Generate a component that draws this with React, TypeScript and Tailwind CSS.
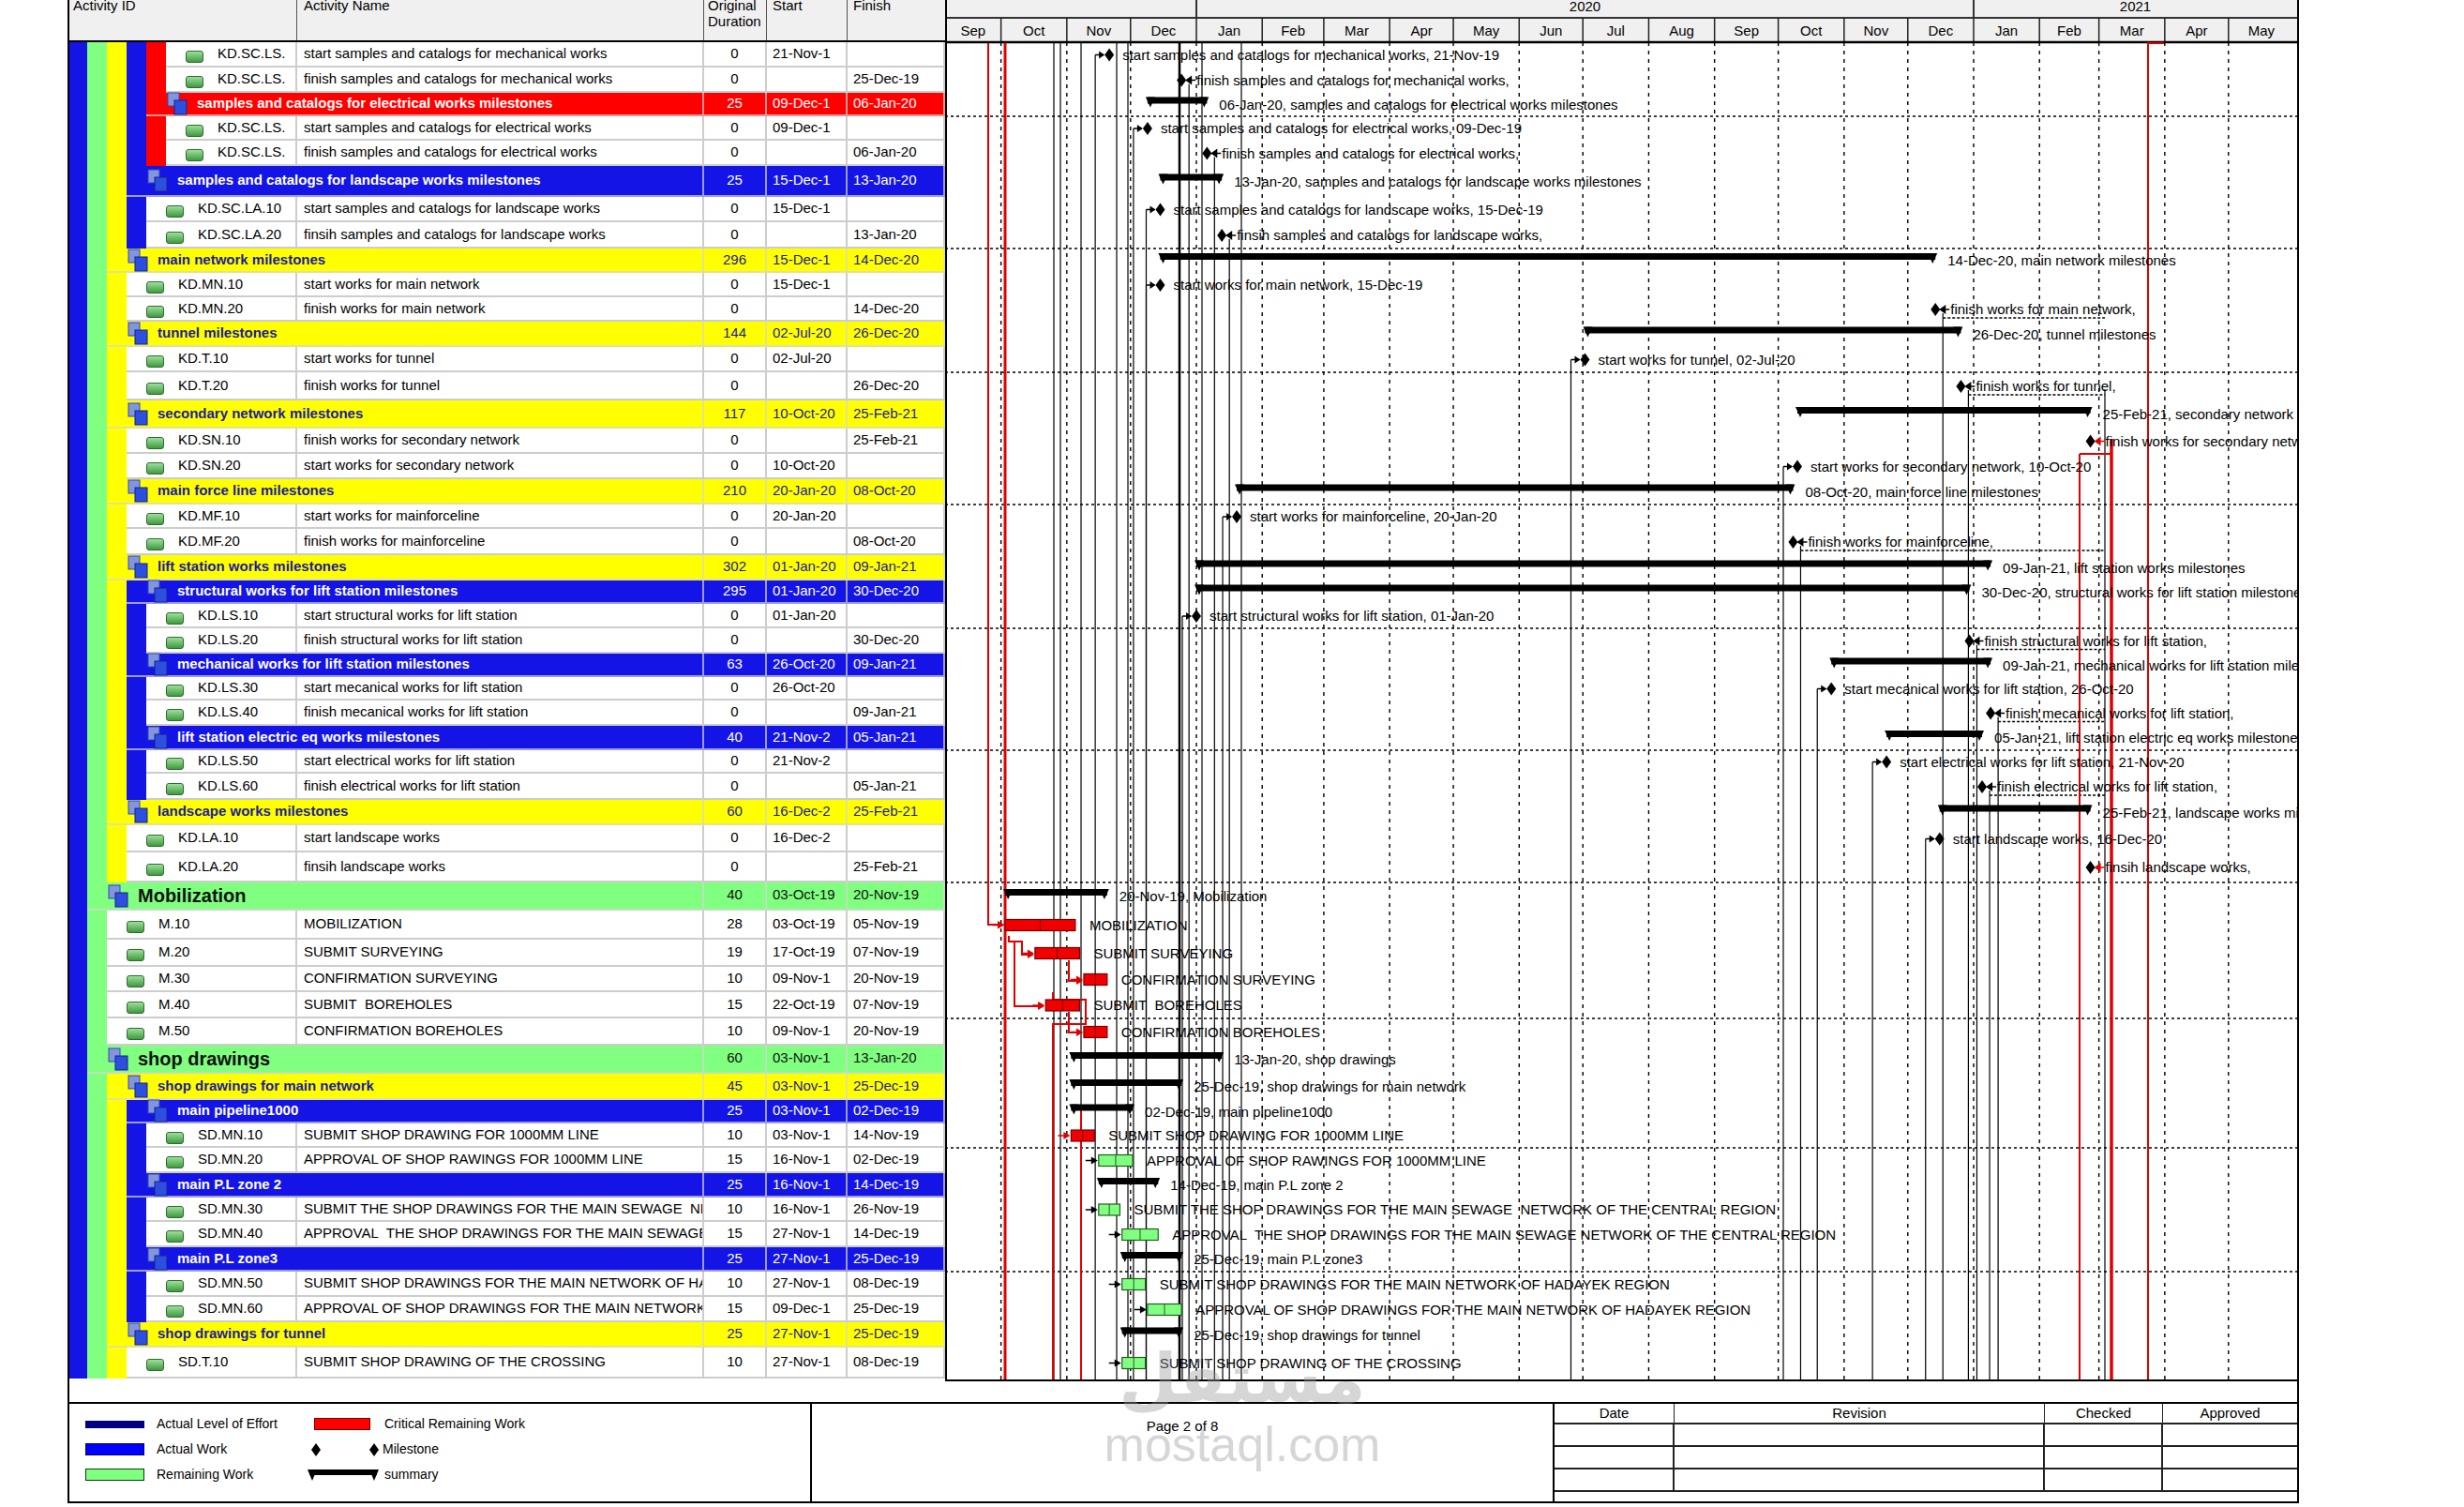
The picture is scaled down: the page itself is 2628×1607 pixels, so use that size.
import React from "react";

const MON = ["Jan", "Feb", "Mar", "Apr", "May", "Jun", "Jul", "Aug", "Sep", "Oct", "Nov", "Dec"];

// gantt scale: 1-Jan-20 sits at x=268, 2.265 px per day
const GW = 1442;
const GH = 1473;
const X0 = 268;
const PX = 2.265;

function days(s: string) {
  const [d, m, y] = s.split("-");
  return (Date.UTC(2000 + Number(y), MON.indexOf(m), Number(d)) - Date.UTC(2020, 0, 1)) / 86400000;
}
const X = (s: string) => X0 + days(s) * PX;

type Bar = {
  t: "sum" | "ms" | "mf" | "red" | "grn";
  s: string;
  e?: string;
  label: string;
  crit?: boolean;
  dash?: boolean;
};

type Row = {
  hc: string;
  b: string;
  k: "leaf" | "group" | "big";
  c?: "R" | "B" | "Y" | "G";
  id?: string;
  name: string;
  dur: string;
  st: string;
  fi: string;
  bar: Bar;
};

const ROWS: Row[] = [
  { hc: "h-[27px]", b: "BGYBR", k: "leaf", id: "KD.SC.LS.", name: "start samples and catalogs for mechanical works", dur: "0", st: "21-Nov-1", fi: "", bar: { t: "ms", s: "21-Nov-19", label: "start samples and catalogs for mechanical works, 21-Nov-19" } },
  { hc: "h-[27px]", b: "BGYBR", k: "leaf", id: "KD.SC.LS.", name: "finish samples and catalogs for mechanical works", dur: "0", st: "", fi: "25-Dec-19", bar: { t: "mf", s: "25-Dec-19", label: "finish samples and catalogs for mechanical works," } },
  { hc: "h-[25px]", b: "BGYB", k: "group", c: "R", name: "samples and catalogs for electrical works milestones", dur: "25", st: "09-Dec-1", fi: "06-Jan-20", bar: { t: "sum", s: "09-Dec-19", e: "06-Jan-20", label: "06-Jan-20, samples and catalogs for electrical works milestones" } },
  { hc: "h-[26px]", b: "BGYBR", k: "leaf", id: "KD.SC.LS.", name: "start samples and catalogs for electrical works", dur: "0", st: "09-Dec-1", fi: "", bar: { t: "ms", s: "09-Dec-19", label: "start samples and catalogs for electrical works, 09-Dec-19" } },
  { hc: "h-[27px]", b: "BGYBR", k: "leaf", id: "KD.SC.LS.", name: "finish samples and catalogs for electrical works", dur: "0", st: "", fi: "06-Jan-20", bar: { t: "mf", s: "06-Jan-20", label: "finish samples and catalogs for electrical works," } },
  { hc: "h-[33px]", b: "BGY", k: "group", c: "B", name: "samples and catalogs for landscape works milestones", dur: "25", st: "15-Dec-1", fi: "13-Jan-20", bar: { t: "sum", s: "15-Dec-19", e: "13-Jan-20", label: "13-Jan-20, samples and catalogs for landscape works milestones" } },
  { hc: "h-[27px]", b: "BGYB", k: "leaf", id: "KD.SC.LA.10", name: "start samples and catalogs for landscape works", dur: "0", st: "15-Dec-1", fi: "", bar: { t: "ms", s: "15-Dec-19", label: "start samples and catalogs for landscape works, 15-Dec-19" } },
  { hc: "h-[28px]", b: "BGYB", k: "leaf", id: "KD.SC.LA.20", name: "finsih samples and catalogs for landscape works", dur: "0", st: "", fi: "13-Jan-20", bar: { t: "mf", s: "13-Jan-20", label: "finsih samples and catalogs for landscape works," } },
  { hc: "h-[26px]", b: "BG", k: "group", c: "Y", name: "main network milestones", dur: "296", st: "15-Dec-1", fi: "14-Dec-20", bar: { t: "sum", s: "15-Dec-19", e: "14-Dec-20", label: "14-Dec-20, main network milestones" } },
  { hc: "h-[26px]", b: "BGY", k: "leaf", id: "KD.MN.10", name: "start works for main network", dur: "0", st: "15-Dec-1", fi: "", bar: { t: "ms", s: "15-Dec-19", label: "start works for main network, 15-Dec-19" } },
  { hc: "h-[26px]", b: "BGY", k: "leaf", id: "KD.MN.20", name: "finish works for main network", dur: "0", st: "", fi: "14-Dec-20", bar: { t: "mf", s: "14-Dec-20", label: "finish works for main network,", dash: true } },
  { hc: "h-[27px]", b: "BG", k: "group", c: "Y", name: "tunnel milestones", dur: "144", st: "02-Jul-20", fi: "26-Dec-20", bar: { t: "sum", s: "02-Jul-20", e: "26-Dec-20", label: "26-Dec-20, tunnel milestones" } },
  { hc: "h-[27px]", b: "BGY", k: "leaf", id: "KD.T.10", name: "start works for tunnel", dur: "0", st: "02-Jul-20", fi: "", bar: { t: "ms", s: "02-Jul-20", label: "start works for tunnel, 02-Jul-20" } },
  { hc: "h-[30px]", b: "BGY", k: "leaf", id: "KD.T.20", name: "finish works for tunnel", dur: "0", st: "", fi: "26-Dec-20", bar: { t: "mf", s: "26-Dec-20", label: "finish works for tunnel,", dash: true } },
  { hc: "h-[30px]", b: "BG", k: "group", c: "Y", name: "secondary network milestones", dur: "117", st: "10-Oct-20", fi: "25-Feb-21", bar: { t: "sum", s: "10-Oct-20", e: "25-Feb-21", label: "25-Feb-21, secondary network milestones" } },
  { hc: "h-[27px]", b: "BGY", k: "leaf", id: "KD.SN.10", name: "finish works for secondary network", dur: "0", st: "", fi: "25-Feb-21", bar: { t: "mf", s: "25-Feb-21", label: "finish works for secondary network,", crit: true } },
  { hc: "h-[27px]", b: "BGY", k: "leaf", id: "KD.SN.20", name: "start works for secondary network", dur: "0", st: "10-Oct-20", fi: "", bar: { t: "ms", s: "10-Oct-20", label: "start works for secondary network, 10-Oct-20" } },
  { hc: "h-[27px]", b: "BG", k: "group", c: "Y", name: "main force line milestones", dur: "210", st: "20-Jan-20", fi: "08-Oct-20", bar: { t: "sum", s: "20-Jan-20", e: "08-Oct-20", label: "08-Oct-20, main force line milestones" } },
  { hc: "h-[26px]", b: "BGY", k: "leaf", id: "KD.MF.10", name: "start works for mainforceline", dur: "0", st: "20-Jan-20", fi: "", bar: { t: "ms", s: "20-Jan-20", label: "start works for mainforceline, 20-Jan-20" } },
  { hc: "h-[28px]", b: "BGY", k: "leaf", id: "KD.MF.20", name: "finish works for mainforceline", dur: "0", st: "", fi: "08-Oct-20", bar: { t: "mf", s: "08-Oct-20", label: "finish works for mainforceline,", dash: true } },
  { hc: "h-[27px]", b: "BG", k: "group", c: "Y", name: "lift station works milestones", dur: "302", st: "01-Jan-20", fi: "09-Jan-21", bar: { t: "sum", s: "01-Jan-20", e: "09-Jan-21", label: "09-Jan-21, lift station works milestones" } },
  { hc: "h-[25px]", b: "BGY", k: "group", c: "B", name: "structural works for lift station milestones", dur: "295", st: "01-Jan-20", fi: "30-Dec-20", bar: { t: "sum", s: "01-Jan-20", e: "30-Dec-20", label: "30-Dec-20, structural works for lift station milestones" } },
  { hc: "h-[26px]", b: "BGYB", k: "leaf", id: "KD.LS.10", name: "start structural works for lift station", dur: "0", st: "01-Jan-20", fi: "", bar: { t: "ms", s: "01-Jan-20", label: "start structural works for lift station, 01-Jan-20" } },
  { hc: "h-[27px]", b: "BGYB", k: "leaf", id: "KD.LS.20", name: "finish structural works for lift station", dur: "0", st: "", fi: "30-Dec-20", bar: { t: "mf", s: "30-Dec-20", label: "finish structural works for lift station,", dash: true } },
  { hc: "h-[25px]", b: "BGY", k: "group", c: "B", name: "mechanical works for lift station milestones", dur: "63", st: "26-Oct-20", fi: "09-Jan-21", bar: { t: "sum", s: "26-Oct-20", e: "09-Jan-21", label: "09-Jan-21, mechanical works for lift station milestones" } },
  { hc: "h-[25px]", b: "BGYB", k: "leaf", id: "KD.LS.30", name: "start mecanical works for lift station", dur: "0", st: "26-Oct-20", fi: "", bar: { t: "ms", s: "26-Oct-20", label: "start mecanical works for lift station, 26-Oct-20" } },
  { hc: "h-[27px]", b: "BGYB", k: "leaf", id: "KD.LS.40", name: "finish mecanical works for lift station", dur: "0", st: "", fi: "09-Jan-21", bar: { t: "mf", s: "09-Jan-21", label: "finish mecanical works for lift station,", dash: true } },
  { hc: "h-[26px]", b: "BGY", k: "group", c: "B", name: "lift station electric eq works milestones", dur: "40", st: "21-Nov-2", fi: "05-Jan-21", bar: { t: "sum", s: "21-Nov-20", e: "05-Jan-21", label: "05-Jan-21, lift station electric eq works milestones" } },
  { hc: "h-[25px]", b: "BGYB", k: "leaf", id: "KD.LS.50", name: "start electrical works for lift station", dur: "0", st: "21-Nov-2", fi: "", bar: { t: "ms", s: "21-Nov-20", label: "start electrical works for lift station, 21-Nov-20" } },
  { hc: "h-[28px]", b: "BGYB", k: "leaf", id: "KD.LS.60", name: "finish electrical works for lift station", dur: "0", st: "", fi: "05-Jan-21", bar: { t: "mf", s: "05-Jan-21", label: "finish electrical works for lift station,", dash: true } },
  { hc: "h-[27px]", b: "BG", k: "group", c: "Y", name: "landscape works milestones", dur: "60", st: "16-Dec-2", fi: "25-Feb-21", bar: { t: "sum", s: "16-Dec-20", e: "25-Feb-21", label: "25-Feb-21, landscape works milestones" } },
  { hc: "h-[29px]", b: "BGY", k: "leaf", id: "KD.LA.10", name: "start landscape works", dur: "0", st: "16-Dec-2", fi: "", bar: { t: "ms", s: "16-Dec-20", label: "start landscape works, 16-Dec-20" } },
  { hc: "h-[32px]", b: "BGY", k: "leaf", id: "KD.LA.20", name: "finsih landscape works", dur: "0", st: "", fi: "25-Feb-21", bar: { t: "mf", s: "25-Feb-21", label: "finsih landscape works,", crit: true } },
  { hc: "h-[30px]", b: "B", k: "big", c: "G", name: "Mobilization", dur: "40", st: "03-Oct-19", fi: "20-Nov-19", bar: { t: "sum", s: "03-Oct-19", e: "20-Nov-19", label: "20-Nov-19, Mobilization" } },
  { hc: "h-[31px]", b: "BG", k: "leaf", id: "M.10", name: "MOBILIZATION", dur: "28", st: "03-Oct-19", fi: "05-Nov-19", bar: { t: "red", s: "03-Oct-19", e: "05-Nov-19", label: "MOBILIZATION" } },
  { hc: "h-[29px]", b: "BG", k: "leaf", id: "M.20", name: "SUBMIT SURVEYING", dur: "19", st: "17-Oct-19", fi: "07-Nov-19", bar: { t: "red", s: "17-Oct-19", e: "07-Nov-19", label: "SUBMIT SURVEYING" } },
  { hc: "h-[27px]", b: "BG", k: "leaf", id: "M.30", name: "CONFIRMATION SURVEYING", dur: "10", st: "09-Nov-1", fi: "20-Nov-19", bar: { t: "red", s: "09-Nov-19", e: "20-Nov-19", label: "CONFIRMATION SURVEYING" } },
  { hc: "h-[28px]", b: "BG", k: "leaf", id: "M.40", name: "SUBMIT\u00a0 BOREHOLES", dur: "15", st: "22-Oct-19", fi: "07-Nov-19", bar: { t: "red", s: "22-Oct-19", e: "07-Nov-19", label: "SUBMIT\u00a0 BOREHOLES" } },
  { hc: "h-[29px]", b: "BG", k: "leaf", id: "M.50", name: "CONFIRMATION BOREHOLES", dur: "10", st: "09-Nov-1", fi: "20-Nov-19", bar: { t: "red", s: "09-Nov-19", e: "20-Nov-19", label: "CONFIRMATION BOREHOLES" } },
  { hc: "h-[30px]", b: "B", k: "big", c: "G", name: "shop drawings", dur: "60", st: "03-Nov-1", fi: "13-Jan-20", bar: { t: "sum", s: "03-Nov-19", e: "13-Jan-20", label: "13-Jan-20, shop drawings" } },
  { hc: "h-[28px]", b: "BG", k: "group", c: "Y", name: "shop drawings for main network", dur: "45", st: "03-Nov-1", fi: "25-Dec-19", bar: { t: "sum", s: "03-Nov-19", e: "25-Dec-19", label: "25-Dec-19, shop drawings for main network" } },
  { hc: "h-[25px]", b: "BGY", k: "group", c: "B", name: "main pipeline1000", dur: "25", st: "03-Nov-1", fi: "02-Dec-19", bar: { t: "sum", s: "03-Nov-19", e: "02-Dec-19", label: "02-Dec-19, main pipeline1000" } },
  { hc: "h-[26px]", b: "BGYB", k: "leaf", id: "SD.MN.10", name: "SUBMIT SHOP DRAWING FOR 1000MM LINE", dur: "10", st: "03-Nov-1", fi: "14-Nov-19", bar: { t: "red", s: "03-Nov-19", e: "14-Nov-19", label: "SUBMIT SHOP DRAWING FOR 1000MM LINE" } },
  { hc: "h-[27px]", b: "BGYB", k: "leaf", id: "SD.MN.20", name: "APPROVAL OF SHOP RAWINGS FOR 1000MM LINE", dur: "15", st: "16-Nov-1", fi: "02-Dec-19", bar: { t: "grn", s: "16-Nov-19", e: "02-Dec-19", label: "APPROVAL OF SHOP RAWINGS FOR 1000MM LINE" } },
  { hc: "h-[26px]", b: "BGY", k: "group", c: "B", name: "main P.L zone 2", dur: "25", st: "16-Nov-1", fi: "14-Dec-19", bar: { t: "sum", s: "16-Nov-19", e: "14-Dec-19", label: "14-Dec-19, main P.L zone 2" } },
  { hc: "h-[26px]", b: "BGYB", k: "leaf", id: "SD.MN.30", name: "SUBMIT THE SHOP DRAWINGS FOR THE MAIN SEWAGE\u00a0 NETWORK OF THE CENTRAL REGION", dur: "10", st: "16-Nov-1", fi: "26-Nov-19", bar: { t: "grn", s: "16-Nov-19", e: "26-Nov-19", label: "SUBMIT THE SHOP DRAWINGS FOR THE MAIN SEWAGE\u00a0 NETWORK OF THE CENTRAL REGION" } },
  { hc: "h-[27px]", b: "BGYB", k: "leaf", id: "SD.MN.40", name: "APPROVAL\u00a0 THE SHOP DRAWINGS FOR THE MAIN SEWAGE NETWORK OF THE CENTRAL REGION", dur: "15", st: "27-Nov-1", fi: "14-Dec-19", bar: { t: "grn", s: "27-Nov-19", e: "14-Dec-19", label: "APPROVAL\u00a0 THE SHOP DRAWINGS FOR THE MAIN SEWAGE NETWORK OF THE CENTRAL REGION" } },
  { hc: "h-[26px]", b: "BGY", k: "group", c: "B", name: "main P.L zone3", dur: "25", st: "27-Nov-1", fi: "25-Dec-19", bar: { t: "sum", s: "27-Nov-19", e: "25-Dec-19", label: "25-Dec-19, main P.L zone3" } },
  { hc: "h-[27px]", b: "BGYB", k: "leaf", id: "SD.MN.50", name: "SUBMIT SHOP DRAWINGS FOR THE MAIN NETWORK OF HADAYEK REGION", dur: "10", st: "27-Nov-1", fi: "08-Dec-19", bar: { t: "grn", s: "27-Nov-19", e: "08-Dec-19", label: "SUBMIT SHOP DRAWINGS FOR THE MAIN NETWORK OF HADAYEK REGION" } },
  { hc: "h-[27px]", b: "BGYB", k: "leaf", id: "SD.MN.60", name: "APPROVAL OF SHOP DRAWINGS FOR THE MAIN NETWORK OF HADAYEK REGION", dur: "15", st: "09-Dec-1", fi: "25-Dec-19", bar: { t: "grn", s: "09-Dec-19", e: "25-Dec-19", label: "APPROVAL OF SHOP DRAWINGS FOR THE MAIN NETWORK OF HADAYEK REGION" } },
  { hc: "h-[27px]", b: "BG", k: "group", c: "Y", name: "shop drawings for tunnel", dur: "25", st: "27-Nov-1", fi: "25-Dec-19", bar: { t: "sum", s: "27-Nov-19", e: "25-Dec-19", label: "25-Dec-19, shop drawings for tunnel" } },
  { hc: "h-[33px]", b: "BGY", k: "leaf", id: "SD.T.10", name: "SUBMIT SHOP DRAWING OF THE CROSSING", dur: "10", st: "27-Nov-1", fi: "08-Dec-19", bar: { t: "grn", s: "27-Nov-19", e: "08-Dec-19", label: "SUBMIT SHOP DRAWING OF THE CROSSING" } },
];

const BAND: Record<string, string> = {
  B: "bg-[#1414e6]",
  G: "bg-[#80ff80]",
  Y: "bg-[#ffff00]",
  R: "bg-[#ff0000]",
};

const GROUP: Record<string, string> = {
  R: "bg-[#ff0000] text-white",
  B: "bg-[#1414e6] text-white",
  Y: "bg-[#ffff00] text-[#1c1c9c]",
  G: "bg-[#80ff80] text-[#111]",
};

function Bands({ b }: { b: string }) {
  return (
    <>
      {b.split("").map((c, i) => (
        <div key={i} className={`${i === 0 ? "w-[19px]" : "w-[21px]"} shrink-0 ${BAND[c]}`} />
      ))}
    </>
  );
}

function LeafIcon() {
  return <div className="mt-[6px] h-[13px] w-[19px] shrink-0 rounded-[3px] border border-[#2e6b2e] bg-linear-to-b from-[#9be09b] to-[#3f9a3f]" />;
}

function GroupIcon() {
  return (
    <svg width="22" height="25" viewBox="0 0 22 25" className="shrink-0">
      <rect x="1" y="1" width="12" height="14" fill="#8296dc" stroke="#3346b8" />
      <rect x="8" y="9" width="13" height="15" fill="#2d4fe0" stroke="#14238c" />
    </svg>
  );
}

const cell = "flex items-center overflow-hidden whitespace-nowrap border-b-2 border-r-2 border-[#cdcdcd]";

function TableRow({ r }: { r: Row }) {
  if (r.k === "leaf") {
    return (
      <div className={`flex ${r.hc} text-[15px]`}>
        <div className="flex w-[243px] shrink-0">
          <Bands b={r.b} />
          <div className={`${cell} min-w-0 flex-1 pl-[21px]`}>
            <LeafIcon />
            <span className="ml-[15px]">{r.id}</span>
          </div>
        </div>
        <div className={`${cell} w-[434px] shrink-0 pl-[7px]`}>{r.name}</div>
        <div className={`${cell} w-[67px] shrink-0 justify-center`}>{r.dur}</div>
        <div className={`${cell} w-[86px] shrink-0 pl-[6px]`}>{r.st}</div>
        <div className={`${cell} w-[104px] shrink-0 pl-[6px]`}>{r.fi}</div>
      </div>
    );
  }
  const g = GROUP[r.c ?? "Y"];
  const big = r.k === "big";
  const dcell = `flex overflow-hidden whitespace-nowrap border-b-2 border-r-2 border-[#d6d6d6]/70 ${g} ${big ? "items-start pt-[2px]" : "items-center"}`;
  return (
    <div className={`flex ${r.hc} text-[15px]`}>
      <div className="flex w-[677px] shrink-0">
        <Bands b={r.b} />
        <div className={`flex min-w-0 flex-1 items-center border-b-2 border-r-2 border-[#d6d6d6]/70 pl-[22px] font-bold ${g}`}>
          <GroupIcon />
          <span className={`ml-[10px] whitespace-nowrap ${big ? "text-[20px]" : ""}`}>{r.name}</span>
        </div>
      </div>
      <div className={`${dcell} w-[67px] shrink-0 justify-center`}>{r.dur}</div>
      <div className={`${dcell} w-[86px] shrink-0 pl-[6px]`}>{r.st}</div>
      <div className={`${dcell} w-[104px] shrink-0 pl-[6px]`}>{r.fi}</div>
    </div>
  );
}

function Table() {
  return (
    <div className="flex w-[934px] shrink-0 flex-col">
      <div className="flex h-[45px] shrink-0 border-b-2 border-black bg-[#f0f0f0] text-[15px] leading-[17px]">
        <div className="w-[243px] border-r border-[#555] pl-[4px]">
          <span className="-mt-[3px] block">Activity ID</span>
        </div>
        <div className="w-[434px] border-r border-[#555] pl-[7px]">
          <span className="-mt-[3px] block">Activity Name</span>
        </div>
        <div className="w-[67px] border-r border-[#555] pl-[4px]">
          <span className="-mt-[3px] block">Original</span>
          <span className="block">Duration</span>
        </div>
        <div className="w-[86px] border-r border-[#555] pl-[6px]">
          <span className="-mt-[3px] block">Start</span>
        </div>
        <div className="w-[104px] pl-[6px]">
          <span className="-mt-[3px] block">Finish</span>
        </div>
      </div>
      {ROWS.map((r, i) => (
        <TableRow key={i} r={r} />
      ))}
    </div>
  );
}

function BarShape({ b, cy }: { b: Bar; cy: number }) {
  if (b.t === "sum") {
    const x1 = X(b.s);
    const x2 = X(b.e!);
    return (
      <g>
        <rect x={x1} y={cy - 8} width={x2 - x1} height={7} fill="black" />
        <polygon points={`${x1 - 2},${cy - 8} ${x1 + 8},${cy - 8} ${x1 + 3},${cy + 3}`} fill="black" />
        <polygon points={`${x2 - 8},${cy - 8} ${x2 + 2},${cy - 8} ${x2 - 3},${cy + 3}`} fill="black" />
        <text x={x2 + 13} y={cy + 5}>{b.label}</text>
      </g>
    );
  }
  if (b.t === "ms") {
    const x = X(b.s);
    return (
      <g>
        <line x1={x - 15} y1={cy} x2={x - 6} y2={cy} stroke="black" strokeWidth={1.5} />
        <polygon points={`${x - 11},${cy - 4} ${x - 5},${cy} ${x - 11},${cy + 4}`} fill="black" />
        <polygon points={`${x},${cy - 7} ${x + 5},${cy} ${x},${cy + 7} ${x - 5},${cy}`} fill="black" />
        <text x={x + 14} y={cy + 5}>{b.label}</text>
      </g>
    );
  }
  if (b.t === "mf") {
    const x = X(b.s);
    const col = b.crit ? "#e00000" : "black";
    return (
      <g>
        <polygon points={`${x},${cy - 7} ${x + 5},${cy} ${x},${cy + 7} ${x - 5},${cy}`} fill="black" />
        <polygon points={`${x + 4},${cy} ${x + 11},${cy - 5} ${x + 11},${cy + 5}`} fill={col} />
        <line x1={x + 10} y1={cy} x2={x + 15} y2={cy} stroke={col} strokeWidth={1.5} />
        <text x={x + 16} y={cy + 5}>{b.label}</text>
      </g>
    );
  }
  const x1 = X(b.s);
  const x2 = X(b.e!);
  const red = b.t === "red";
  return (
    <g>
      <line x1={x1 - 14} y1={cy} x2={x1 - 4} y2={cy} stroke={red ? "#e00000" : "black"} strokeWidth={1.5} />
      <polygon points={`${x1 - 8},${cy - 4} ${x1 - 1},${cy} ${x1 - 8},${cy + 4}`} fill={red ? "#e00000" : "black"} />
      <rect x={x1} y={cy - 6} width={x2 - x1} height={12} fill={red ? "#f00000" : "#80ff80"} stroke={red ? "#7a0000" : "#1f5f1f"} strokeWidth={1.2} />
      <line x1={(x1 + x2) / 2} y1={cy - 6} x2={(x1 + x2) / 2} y2={cy + 6} stroke={red ? "#7a0000" : "#1f5f1f"} strokeWidth={1} />
      <text x={x2 + 15} y={cy + 5}>{b.label}</text>
    </g>
  );
}

function Gantt() {
  let y = 45;
  const tops = ROWS.map((r) => {
    const t = y;
    y += parseInt(r.hc.slice(3), 10);
    return t;
  });
  const hts = ROWS.map((r) => parseInt(r.hc.slice(3), 10));

  const ticks: { x: number; m: number }[] = [];
  for (let i = 0; i < 23; i++) {
    const yr = 2019 + Math.floor((8 + i) / 12);
    const m = (8 + i) % 12;
    ticks.push({ x: X0 + ((Date.UTC(yr, m, 1) - Date.UTC(2020, 0, 1)) / 86400000) * PX, m });
  }
  const y21 = X("01-Jan-21");

  // link lines hanging from milestones
  const links: { x: number; y: number }[] = [];
  ROWS.forEach((r, i) => {
    const cy = tops[i] + hts[i] / 2;
    if (r.bar.t === "ms") links.push({ x: X(r.bar.s) - 15, y: cy });
    if (r.bar.t === "mf" && !r.bar.crit) links.push({ x: X(r.bar.s) + 8, y: cy + 4 });
  });
  const extra = [116, 123, 145, 183, 195, 274, 316];

  return (
    <svg width={GW} height={GH} className="block shrink-0 font-['Liberation_Sans',Arial,sans-serif] text-[15px]" fill="black">
      <rect x={0} y={0} width={GW} height={45} fill="#f0f0f0" />
      <text x={(X0 + y21) / 2} y={12} textAnchor="middle">2020</text>
      <text x={(y21 + GW) / 2} y={12} textAnchor="middle">2021</text>
      <line x1={0} y1={19} x2={GW} y2={19} stroke="#333" strokeWidth={2} />
      <line x1={X0} y1={0} x2={X0} y2={19} stroke="#333" strokeWidth={2} />
      <line x1={y21} y1={0} x2={y21} y2={19} stroke="#333" strokeWidth={2} />
      {ticks.map((t, i) => {
        const nx = i < ticks.length - 1 ? ticks[i + 1].x : t.x + 70;
        const a = Math.max(0, t.x);
        const b2 = Math.min(GW, nx);
        return (
          <g key={i}>
            {t.x > 2 && t.x < GW - 3 && <line x1={t.x} y1={19} x2={t.x} y2={45} stroke="#222" strokeWidth={1.5} />}
            {b2 - a > 30 && (
              <text x={(a + b2) / 2} y={38} textAnchor="middle">{MON[t.m]}</text>
            )}
            {t.x > 2 && t.x < GW - 3 && (
              <line x1={t.x} y1={45} x2={t.x} y2={GH} stroke="black" strokeWidth={1.4} strokeDasharray="4 5" />
            )}
          </g>
        );
      })}
      <line x1={0} y1={45} x2={GW} y2={45} stroke="black" strokeWidth={2.5} />

      {ROWS.map((_, i) =>
        i % 5 === 2 && i < ROWS.length - 1 ? (
          <line key={i} x1={0} y1={tops[i] + hts[i]} x2={GW} y2={tops[i] + hts[i]} stroke="black" strokeWidth={1.4} strokeDasharray="3 3" />
        ) : null
      )}

      {extra.map((x) => (
        <line key={x} x1={x} y1={46} x2={x} y2={GH} stroke="black" strokeWidth={1.2} />
      ))}
      {links.map((l, i) => (
        <line key={i} x1={l.x} y1={l.y} x2={l.x} y2={GH} stroke="black" strokeWidth={1.2} />
      ))}
      <line x1={250} y1={46} x2={250} y2={GH} stroke="black" strokeWidth={2.5} />
      <line x1={1237} y1={415} x2={1237} y2={GH} stroke="black" strokeWidth={1.2} />
      {ROWS.map((r, i) =>
        r.bar.dash ? (
          <path key={i} d={`M${X(r.bar.s) + 8} ${tops[i] + hts[i] / 2 + 9} H1237`} stroke="black" strokeWidth={1.4} strokeDasharray="3 2" fill="none" />
        ) : null
      )}

      {/* critical path lines */}
      <g stroke="#e00000" fill="none">
        <path d="M46 46 V986 H58" strokeWidth={2} />
        <line x1={64} y1={46} x2={64} y2={GH} strokeWidth={3} />
        <path d="M68 998 V1004 H82 V1018 H90" strokeWidth={2} />
        <path d="M74 1004 V1073 H101" strokeWidth={2} />
        <path d="M132 1024 V1046 H142" strokeWidth={2} />
        <path d="M132 1079 V1101 H142" strokeWidth={2} />
        <path d="M115 1058 V1066 H150 V1092 H115 V1118" strokeWidth={2} />
        <line x1={115} y1={1118} x2={115} y2={GH} strokeWidth={2} />
        <line x1={145} y1={1180} x2={145} y2={GH} strokeWidth={2} />
        <path d="M1210 484 H1244" strokeWidth={2} />
        <line x1={1210} y1={484} x2={1210} y2={GH} strokeWidth={2} />
        <line x1={1244} y1={468} x2={1244} y2={GH} strokeWidth={3.5} />
        <path d="M1300 46 H1283 V1473" strokeWidth={2} />
      </g>
      <g fill="#e00000">
        <polygon points="56,982 63,986 56,990" />
        <polygon points="88,1014 95,1018 88,1022" />
        <polygon points="99,1069 106,1073 99,1077" />
        <polygon points="140,1042 147,1046 140,1050" />
        <polygon points="140,1097 147,1101 140,1105" />
      </g>

      {ROWS.map((r, i) => (
        <BarShape key={i} b={r.bar} cy={tops[i] + hts[i] / 2} />
      ))}

      <line x1={1} y1={0} x2={1} y2={GH} stroke="black" strokeWidth={2} />
      <line x1={0} y1={GH - 1} x2={GW} y2={GH - 1} stroke="black" strokeWidth={2} />
    </svg>
  );
}

function Legend() {
  return (
    <div className="flex h-[108px] border-b-2 border-t-2 border-black text-[14px]">
      <div className="w-[792px] shrink-0 border-r-2 border-black pl-[17px] pt-[8px]">
        <div className="grid grid-cols-[237px_1fr] grid-rows-[27px_27px_27px]">
          <div className="flex items-center">
            <div className="h-[8px] w-[63px] bg-[#000080]" />
            <span className="ml-[13px]">Actual Level of Effort</span>
          </div>
          <div className="flex items-center">
            <div className="ml-[7px] h-[13px] w-[60px] border border-[#700000] bg-[#ff0000]" />
            <span className="ml-[15px]">Critical Remaining Work</span>
          </div>
          <div className="flex items-center">
            <div className="h-[13px] w-[63px] border border-[#000060] bg-[#0000ff]" />
            <span className="ml-[13px]">Actual Work</span>
          </div>
          <div className="flex items-center">
            <svg width="76" height="16" viewBox="0 0 76 16" className="ml-[4px]">
              <polygon points="5,1 10,8 5,15 0,8" fill="black" />
              <polygon points="67,1 72,8 67,15 62,8" fill="black" />
            </svg>
            <span className="ml-[0px]">Milestone</span>
          </div>
          <div className="flex items-center">
            <div className="h-[13px] w-[63px] border border-[#004000] bg-[#80ff80]" />
            <span className="ml-[13px]">Remaining Work</span>
          </div>
          <div className="flex items-center">
            <svg width="76" height="16" viewBox="0 0 76 16">
              <rect x="2" y="2" width="72" height="6" fill="black" />
              <polygon points="0,2 10,2 5,14" fill="black" />
              <polygon points="66,2 76,2 71,14" fill="black" />
            </svg>
            <span className="ml-[6px]">summary</span>
          </div>
        </div>
      </div>
      <div className="flex w-[792px] shrink-0 justify-center border-r-2 border-black pt-[13px] text-[15px]">Page 2 of 8</div>
      <div className="flex flex-1 flex-col text-[15px]">
        <div className="flex h-[22px] border-b-2 border-[#222]">
          <div className="flex w-[128px] items-center justify-center border-r border-[#222]">Date</div>
          <div className="flex w-[395px] items-center justify-center border-r border-[#222]">Revision</div>
          <div className="flex w-[126px] items-center justify-center border-r border-[#222]">Checked</div>
          <div className="flex flex-1 items-center justify-center">Approved</div>
        </div>
        {[0, 1, 2].map((i) => (
          <div key={i} className="flex h-[24px] border-b-2 border-[#222]">
            <div className="w-[128px] border-r-2 border-[#222]" />
            <div className="w-[395px] border-r-2 border-[#222]" />
            <div className="w-[126px] border-r-2 border-[#222]" />
            <div className="flex-1" />
          </div>
        ))}
      </div>
    </div>
  );
}

export default function App() {
  return (
    <div className="relative h-[1607px] w-[2628px] overflow-hidden bg-white font-['Liberation_Sans',Arial,sans-serif] text-black">
      <div className="ml-[72px] flex w-[2380px] flex-col border-x-2 border-black">
        <div className="flex h-[1473px]">
          <Table />
          <Gantt />
        </div>
        <div className="h-[22px]" />
        <Legend />
      </div>
      <div className="pointer-events-none absolute left-[1160px] top-[1428px] flex w-[330px] flex-col items-center text-[#9a9a9a] opacity-40">
        <span className="font-['DejaVu_Sans',sans-serif] text-[72px] font-bold leading-[84px]">مستقل</span>
        <span className="text-[52px] leading-[56px]">mostaql.com</span>
      </div>
    </div>
  );
}
